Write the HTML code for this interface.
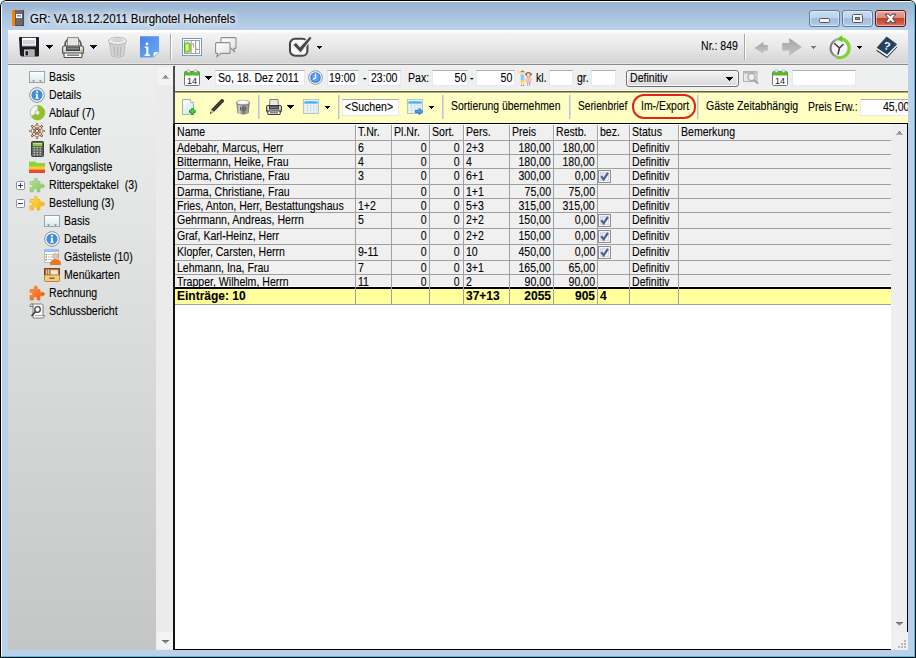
<!DOCTYPE html>
<html><head><meta charset="utf-8">
<style>
*{box-sizing:border-box;margin:0;padding:0}
html,body{width:916px;height:658px;overflow:hidden;background:#fff}
body{font-family:"Liberation Sans",sans-serif;font-size:12px;color:#000;position:relative}
.a{position:absolute}
svg{position:absolute;overflow:visible}
.t{position:absolute;white-space:pre;font-size:12px;line-height:14px;height:14px;transform:scaleX(.88);transform-origin:0 50%;-webkit-text-stroke:.1px #000}
.r{transform-origin:100% 50%}
.b{font-weight:bold;transform:scaleX(1)}
#win{left:0;top:0;width:916px;height:658px;background:#b9d1ea;border-radius:6px 6px 0 0;overflow:hidden}
#title{left:2px;top:2px;width:912px;height:28px;background:linear-gradient(#99b4d1,#b9d1ea)}
.inp{position:absolute;background:#fff;border:1px solid #e3e9ef;border-top-color:#abadb3}
.sep{position:absolute;width:2px;border-left:1px solid #a8a8a8;border-right:1px solid #fff}
.ysep{position:absolute;width:2px;border-left:1px solid #c2c2d0;border-right:1px solid #dedee0}
.hl{position:absolute;height:1px;background:#a0a0a0}
.vl{position:absolute;width:1px;background:#a0a0a0}
.cb{position:absolute;width:13px;height:13px;border:1px solid #8e8f8f;background:linear-gradient(135deg,#cdd1dc,#f6f6f9 70%);box-shadow:inset 0 0 0 1px #f4f4f4, inset 0 0 0 2px #d6d9e2}
.arr{position:absolute;width:0;height:0;border-style:solid;border-color:#000 transparent transparent transparent}
</style></head><body>
<div id="win" class="a">
<div class="a" style="left:1px;top:1px;width:914px;height:656px;border:1px solid #fff;border-right-color:#38c8f0;border-bottom-color:#38c8f0;border-radius:5px 5px 0 0"></div>
<div class="a" style="left:0;top:0;width:916px;height:658px;border:1px solid #000;border-radius:6px 6px 0 0"></div>
<div id="title" class="a"></div>

<svg style="left:12px;top:10px" width="12" height="16" viewBox="0 0 12 16"><rect x="0" y="0" width="12" height="16" rx="1" fill="#6a6a6a"/><rect x="10.5" y="0" width="1.5" height="16" fill="#4c4c4c"/><rect x="3" y="15" width="9" height="1" fill="#4c4c4c"/><rect x="0" y="0" width="3" height="16" fill="#ff7f00"/><rect x="3" y="0" width=".6" height="16" fill="#555"/><rect x="4" y="4" width="6" height="4" fill="#fff"/><rect x="5" y="5.2" width="4" height="1.3" fill="#5878d8"/></svg>
<span class="t" style="left:30px;top:11px;font-size:12px;line-height:16px;height:16px;transform:scaleX(.96);text-shadow:0 0 6px #fff,0 0 6px #fff,0 0 10px #fff">GR: VA 18.12.2011 Burghotel Hohenfels</span>
<div class="a" style="left:809px;top:10px;width:31px;height:17px;border:1px solid #5d7ea3;border-radius:3px;background:linear-gradient(#c9dbef 0,#bfd3ea 45%,#a3bfdf 50%,#a9c4e2 80%,#b9d0ea 100%);box-shadow:inset 0 0 0 1px rgba(255,255,255,.45)"></div><div class="a" style="left:842px;top:10px;width:31px;height:17px;border:1px solid #5d7ea3;border-radius:3px;background:linear-gradient(#c9dbef 0,#bfd3ea 45%,#a3bfdf 50%,#a9c4e2 80%,#b9d0ea 100%);box-shadow:inset 0 0 0 1px rgba(255,255,255,.45)"></div><div class="a" style="left:875px;top:10px;width:31px;height:17px;border:1px solid #5b1a22;border-radius:3px;background:linear-gradient(#e9a99c 0,#dc8b7b 45%,#c4432b 50%,#cf5a45 80%,#d87a66 100%);box-shadow:inset 0 0 0 1px rgba(255,255,255,.45)"></div><div class="a" style="left:819px;top:18px;width:11px;height:5px;background:#f4f4f4;border:1px solid #555c66;border-radius:1.5px"></div><div class="a" style="left:852px;top:14px;width:11px;height:9px;background:#f4f4f4;border:1px solid #555c66;border-radius:1.5px"></div><div class="a" style="left:855px;top:17px;width:5px;height:3px;background:#7f9fd0;border:1px solid #555c66"></div><svg style="left:884px;top:13px" width="13" height="11" viewBox="0 0 13 11"><path d="M1.200 1.200 L5 1.200 L6.500 3.200 L8 1.200 L11.800 1.200 L8.500 5.400 L11.800 9.700 L8 9.700 L6.500 7.600 L5 9.700 L1.200 9.700 L4.500 5.400 Z" fill="#fff" stroke="#44444e" stroke-width="1" stroke-linejoin="round"/></svg>
<div class="a" style="left:8px;top:30px;width:900px;height:620px;background:#f0f0f0;overflow:hidden"><div class="a" style="left:-8px;top:-30px;width:916px;height:658px">
<div class="a" style="left:8px;top:30px;width:900px;height:33px;background:linear-gradient(#fff 0,#fff 2px,#f4f4f4 3px,#e9e9e9 16px,#d4d4d4 33px)"></div>
<div class="a" style="left:8px;top:63px;width:900px;height:1px;background:#e4e4e4"></div>
<div class="a" style="left:8px;top:64px;width:900px;height:1px;background:#8a8a8a"></div>
<div class="a" style="left:8px;top:65px;width:900px;height:1px;background:#f2f2f2"></div>
<svg style="left:19px;top:37px" width="20" height="20" viewBox="0 0 20 20"><path d="M0 1 a1 1 0 0 1 1-1 h18 a1 1 0 0 1 1 1 v17.500 a1 1 0 0 1-1 1 h-16.500 l-1.500-1.500z" fill="#1c1c24"/><rect x="3" y=".8" width="14" height="8.400" fill="#fdfdfd"/><rect x="4" y="3" width="12" height="4.300" fill="#d4d4d4"/><rect x="3" y="8.200" width="14" height="1" fill="#b8c4e0"/><rect x="5" y="12.500" width="10.500" height="7" fill="#c4c4c4"/><rect x="10" y="12.500" width="5.500" height="7" fill="#b0b0b0"/><rect x="6.500" y="14" width="2.600" height="4.500" rx="1" fill="#1c1c24"/></svg><svg style="left:46px;top:45px" width="7" height="4" fill="#000" shape-rendering="crispEdges"><rect x="0" y="0" width="7" height="1"/><rect x="1" y="1" width="5" height="1"/><rect x="2" y="2" width="3" height="1"/><rect x="3" y="3" width="1" height="1"/></svg><svg style="left:62px;top:37px" width="22" height="21" viewBox="0 0 22 21"><defs><linearGradient id="gp" x1="0" y1="0" x2="0" y2="1"><stop offset="0" stop-color="#f4f4f2"/><stop offset="1" stop-color="#c4c6c2"/></linearGradient></defs><path d="M3 10 q-.5-6 3-7.500 M19 10 q.5-6-3-7.500" fill="none" stroke="#5a5a5a" stroke-width="1.600"/><path d="M5.500 .7 h11 l.3 9 h-11.600z" fill="#f2f4ee" stroke="#6e6e6e" stroke-width=".9"/><rect x="6.500" y="1.500" width="9" height="7" fill="#e2e6dc"/><rect x=".6" y="9" width="20.800" height="8" rx="1.800" fill="url(#gp)" stroke="#4c4c4c" stroke-width="1.100"/><rect x="4" y="9.500" width="14" height="4.500" fill="#3e4444"/><rect x="5" y="10.500" width="12" height="2" fill="#7c8884"/><rect x="18.800" y="13" width="1.300" height="1.500" fill="#f0a020"/><path d="M2 16 h18 v3.500 q0 1-1 1 h-16 q-1 0-1-1z" fill="#f8f8f8" stroke="#4c4c4c" stroke-width="1.100"/><rect x="5" y="17.600" width="12" height="1.100" fill="#555"/></svg><svg style="left:90px;top:45px" width="7" height="4" fill="#000" shape-rendering="crispEdges"><rect x="0" y="0" width="7" height="1"/><rect x="1" y="1" width="5" height="1"/><rect x="2" y="2" width="3" height="1"/><rect x="3" y="3" width="1" height="1"/></svg><svg style="left:108px;top:36px" width="19" height="22" viewBox="0 0 19 22"><ellipse cx="9.5" cy="5" rx="9" ry="3.6" fill="#f0f0f0" stroke="#b6b6b6" stroke-width="1"/><path d="M1.500 7 L3.500 20 Q9.500 23 15.500 20 L17.500 7 Q9.500 10.500 1.500 7z" fill="#d2d2d2" stroke="#b6b6b6" stroke-width=".8"/><path d="M6 10.500 L6.800 19.500 M9.500 11 V20 M13 10.500 L12.200 19.500" stroke="#b6b6b6" stroke-width="1.200"/><ellipse cx="9.5" cy="4.300" rx="6" ry="2" fill="#b6b6b6" opacity=".5"/></svg><svg style="left:140px;top:36px" width="19" height="22" viewBox="0 0 19 22"><defs><linearGradient id="gi" x1="0" y1="0" x2="1" y2="1"><stop offset="0" stop-color="#4585e6"/><stop offset="1" stop-color="#6dabf8"/></linearGradient></defs><path d="M0 .2 h19 v15.800 l-5.500 5.400 h-13.500z" fill="url(#gi)"/><path d="M19 16 l-5.500 5.400 v-3.800 q0-1.600 1.600-1.600z" fill="#f2f5fa"/><path d="M13.500 21.400 l5.500-5.400" stroke="#8090a8" stroke-width=".6"/><circle cx="7" cy="7.900" r="1.400" fill="#fff"/><path d="M4.800 10.400 h3.600 v8 h1.600 v1.500 h-5.400 v-1.500 h1.600 v-6.500 h-1.400z" fill="#fff"/></svg><svg style="left:182px;top:38px" width="20" height="18" viewBox="0 0 20 18"><rect x=".5" y=".5" width="19" height="17" fill="#fff" stroke="#6d9fc4"/><rect x="2.500" y="2.500" width="15" height="13" fill="#fff" stroke="#a8a0a0"/><rect x="8.500" y="2.500" width="1.200" height="13" fill="#a8a0a0"/><rect x="13" y="2.500" width="1.200" height="13" fill="#a8a0a0"/><rect x="9.500" y="5.500" width="2" height="1" fill="#a8a0a0"/><rect x="11" y="5.500" width="1" height="4" fill="#a8a0a0"/><rect x="14" y="10.800" width="3.500" height="1.200" fill="#a8a0a0"/><rect x="4.500" y="2.500" width="2" height="1.500" fill="#c8c4c4"/><rect x="2.500" y="5" width="5.500" height="9" rx="1.200" fill="#a6ea48" stroke="#5fa812" stroke-width="1"/><rect x="4" y="6.500" width="2.500" height="6" rx=".8" fill="#ccfa8c"/></svg><svg style="left:215px;top:37px" width="22" height="20" viewBox="0 0 22 20"><defs><linearGradient id="gc" x1="0" y1="0" x2="1" y2="1"><stop offset="0" stop-color="#fff"/><stop offset="1" stop-color="#e2e2e2"/></linearGradient></defs><path d="M7 .6 h13 a1 1 0 0 1 1 1 v8.800 a1 1 0 0 1-1 1 h-1.200 l.6 3.200 l-3.400-3.200 h-9 a1 1 0 0 1-1-1 v-8.800 a1 1 0 0 1 1-1z" fill="url(#gc)" stroke="#8e8e8e" stroke-width="1.100"/><path d="M1.600 5.600 h12.500 a1 1 0 0 1 1 1 v8.800 a1 1 0 0 1-1 1 h-8.300 l-3.800 3.300 l.6-3.300 h-1 a1 1 0 0 1-1-1 v-8.800 a1 1 0 0 1 1-1z" fill="url(#gc)" stroke="#8e8e8e" stroke-width="1.100"/></svg><svg style="left:288px;top:36px" width="24" height="22" viewBox="0 0 24 22"><rect x="2" y="2.700" width="17.400" height="17.100" rx="5" fill="#fbfbfb" stroke="#474747" stroke-width="2.100"/><path d="M5.600 9 L7.900 6.900 L12 11.400 L21.900 .7 L23.500 2 L12.600 16.200 Z" fill="#484848" stroke="#ececec" stroke-width="2.200" paint-order="stroke"/></svg><svg style="left:317px;top:46px" width="5" height="3" fill="#000" shape-rendering="crispEdges"><rect x="0" y="0" width="5" height="1"/><rect x="1" y="1" width="3" height="1"/><rect x="2" y="2" width="1" height="1"/></svg><svg style="left:753px;top:41px" width="16" height="14" viewBox="0 0 16 14"><defs><linearGradient id="ga" x1="0" y1="0" x2="0" y2="1"><stop offset="0" stop-color="#a4a4a4"/><stop offset="1" stop-color="#c6c6c6"/></linearGradient></defs><path d="M1.300 6.900 L10.500 1 V4.100 H14.800 V9.800 H10.500 V12.800 Z" fill="url(#ga)"/></svg><svg style="left:781px;top:38px" width="22" height="18" viewBox="0 0 22 18"><path d="M20.900 9 L8.200 .1 V4.900 H1.200 V12.800 H8.200 V18 Z" fill="url(#ga)"/></svg><svg style="left:811px;top:46px" width="5" height="3" fill="#7a7a7a" shape-rendering="crispEdges"><rect x="0" y="0" width="5" height="1"/><rect x="1" y="1" width="3" height="1"/><rect x="2" y="2" width="1" height="1"/></svg><svg style="left:828px;top:35px" width="24" height="24" viewBox="0 0 24 24"><defs><linearGradient id="gk" x1="0" y1="0" x2="1" y2="0"><stop offset="0" stop-color="#7a7a7a"/><stop offset=".6" stop-color="#c8c8c8"/></linearGradient></defs><circle cx="11.500" cy="13.200" r="9" fill="#f6f4fa" stroke="url(#gk)" stroke-width="2.200"/><path d="M11.500 13 L6.500 8.500 M11.500 13 L15 9.500 M11.500 13 L10 19" stroke="#3c3c3c" stroke-width="1.500" fill="none" stroke-linecap="round"/><path d="M12.500 3.600 A9.600 9.600 0 1 1 8.400 22.200" fill="none" stroke="#7ad828" stroke-width="3"/><path d="M14 .2 L8.800 3.800 L14.600 7.200z" fill="#66cc22"/></svg><svg style="left:857px;top:46px" width="5" height="3" fill="#000" shape-rendering="crispEdges"><rect x="0" y="0" width="5" height="1"/><rect x="1" y="1" width="3" height="1"/><rect x="2" y="2" width="1" height="1"/></svg><svg style="left:876px;top:36px" width="22" height="22" viewBox="0 0 22 22"><path d="M.6 13.600 L11.100 20.400 L21.100 10 V11.300 L11.100 21.900 L.6 14.900z" fill="#1a3450"/><path d="M.6 11.700 L11.100 18.400 L21.100 8.200 V10 L11.100 20.400 L.6 13.600z" fill="#f2f5f8"/><path d="M.6 11.700 L10.600 .4 L21.100 8.200 L11.100 18.400z" fill="#25435f"/><text x="11" y="13.800" font-family="Liberation Sans" font-weight="bold" font-size="11" fill="#fff" text-anchor="middle" transform="rotate(12 11 10)">?</text></svg>
<span class="t " style="left:701px;top:39px;">Nr.: 849</span>
<div class="sep" style="left:170px;top:34px;height:26px"></div>
<div class="sep" style="left:744px;top:34px;height:26px"></div>
<div class="a" style="left:8px;top:66px;width:148px;height:584px;background:linear-gradient(#eef0f0,#c4c6c5)"></div>
<div class="a" style="left:156px;top:66px;width:17px;height:584px;background:#ebebeb"></div>
<div class="a" style="left:157px;top:67px;width:16px;height:18px;background:#f3f3f3"></div>
<div class="a" style="left:157px;top:632px;width:16px;height:17px;background:#f3f3f3"></div>
<div class="a" style="left:173px;top:66px;width:2px;height:584px;background:linear-gradient(#4c4c4c 0,#4c4c4c 57px,#111 58px)"></div>
<svg style="left:162px;top:75px" width="7" height="4" shape-rendering="crispEdges"><rect x="3" y="0" width="1" height="1" fill="#6e6e6e"/><rect x="2" y="1" width="3" height="1" fill="#868686"/><rect x="1" y="2" width="5" height="1" fill="#9c9c9c"/><rect x="0" y="3" width="7" height="1" fill="#b0b0b0"/></svg>
<svg style="left:162px;top:640px" width="7" height="4" shape-rendering="crispEdges"><rect x="0" y="0" width="7" height="1" fill="#6e6e6e"/><rect x="1" y="1" width="5" height="1" fill="#868686"/><rect x="2" y="2" width="3" height="1" fill="#9c9c9c"/><rect x="3" y="3" width="1" height="1" fill="#b0b0b0"/></svg>
<svg style="left:29px;top:69px" width="16" height="16" viewBox="0 0 16 16"><defs><linearGradient id="gb" x1="0" y1="0" x2="0" y2="1"><stop offset="0" stop-color="#fff"/><stop offset="1" stop-color="#d6e8ea"/></linearGradient></defs><rect x=".5" y="2.500" width="15" height="11" fill="url(#gb)" stroke="#98a6a8"/><rect x="4" y="11" width="1" height="2" fill="#7c8c8e"/><rect x="11" y="11" width="1" height="2" fill="#7c8c8e"/><rect x="3" y="11" width="3" height="1" fill="#a8b8ba"/><rect x="10" y="11" width="3" height="1" fill="#a8b8ba"/></svg>
<span class="t " style="left:49px;top:70px;">Basis</span>
<svg style="left:29px;top:87px" width="16" height="16" viewBox="0 0 16 16"><circle cx="8" cy="8" r="7.300" fill="#fff" stroke="#8c8c8c" stroke-width="1"/><circle cx="8" cy="8" r="5.600" fill="#3f8fdc"/><circle cx="8" cy="4.800" r="1.100" fill="#fff"/><path d="M6.500 6.800 h2.400 v4 h.9 v1 h-3.600 v-1 h.9 v-3 h-.6z" fill="#fff"/></svg>
<span class="t " style="left:49px;top:88px;">Details</span>
<svg style="left:29px;top:105px" width="16" height="16" viewBox="0 0 16 16"><circle cx="8.500" cy="7.700" r="4.900" fill="none" stroke="#f4f4f4" stroke-width="4.800"/><circle cx="8.500" cy="7.700" r="7.300" fill="none" stroke="#a8a8a8" stroke-width=".8"/><circle cx="8.500" cy="7.700" r="2.400" fill="none" stroke="#a8a8a8" stroke-width=".8"/><path d="M8.500 2.800 A4.900 4.900 0 1 1 4.100 10" fill="none" stroke="#8fc321" stroke-width="5"/></svg>
<span class="t " style="left:49px;top:106px;">Ablauf (7)</span>
<svg style="left:29px;top:123px" width="16" height="16" viewBox="0 0 16 16"><path d="M9.50 8.00 L14.90 8.00" stroke="#7c5434" stroke-width="2.200" stroke-linecap="round"/><path d="M9.06 9.06 L12.88 12.88" stroke="#7c5434" stroke-width="2.200" stroke-linecap="round"/><path d="M8.00 9.50 L8.00 14.90" stroke="#7c5434" stroke-width="2.200" stroke-linecap="round"/><path d="M6.94 9.06 L3.12 12.88" stroke="#7c5434" stroke-width="2.200" stroke-linecap="round"/><path d="M6.50 8.00 L1.10 8.00" stroke="#7c5434" stroke-width="2.200" stroke-linecap="round"/><path d="M6.94 6.94 L3.12 3.12" stroke="#7c5434" stroke-width="2.200" stroke-linecap="round"/><path d="M8.00 6.50 L8.00 1.10" stroke="#7c5434" stroke-width="2.200" stroke-linecap="round"/><path d="M9.06 6.94 L12.88 3.12" stroke="#7c5434" stroke-width="2.200" stroke-linecap="round"/><circle cx="8" cy="8" r="4.600" fill="none" stroke="#7c5434" stroke-width="2.400"/><circle cx="8" cy="8" r="4.600" fill="none" stroke="#fbf2e6" stroke-width="1"/><path d="M9.50 8.00 L14.90 8.00" stroke="#fbf2e6" stroke-width=".8" stroke-linecap="round"/><path d="M9.06 9.06 L12.88 12.88" stroke="#fbf2e6" stroke-width=".8" stroke-linecap="round"/><path d="M8.00 9.50 L8.00 14.90" stroke="#fbf2e6" stroke-width=".8" stroke-linecap="round"/><path d="M6.94 9.06 L3.12 12.88" stroke="#fbf2e6" stroke-width=".8" stroke-linecap="round"/><path d="M6.50 8.00 L1.10 8.00" stroke="#fbf2e6" stroke-width=".8" stroke-linecap="round"/><path d="M6.94 6.94 L3.12 3.12" stroke="#fbf2e6" stroke-width=".8" stroke-linecap="round"/><path d="M8.00 6.50 L8.00 1.10" stroke="#fbf2e6" stroke-width=".8" stroke-linecap="round"/><path d="M9.06 6.94 L12.88 3.12" stroke="#fbf2e6" stroke-width=".8" stroke-linecap="round"/><circle cx="8" cy="8" r="1.700" fill="#fff" stroke="#7c5434" stroke-width="1"/></svg>
<span class="t " style="left:49px;top:124px;">Info Center</span>
<svg style="left:29px;top:141px" width="16" height="16" viewBox="0 0 16 16"><rect x="2.500" y=".5" width="12" height="15" rx="1" fill="#5c625c" stroke="#3e423e"/><rect x="4" y="2" width="9" height="3" fill="#86d03c"/><rect x="4" y="2" width="9" height="1" fill="#b6ec78"/><rect x="4.5" y="6.0" width="1.600" height="1.300" fill="#c8ccc8"/><rect x="7.5" y="6.0" width="1.600" height="1.300" fill="#c8ccc8"/><rect x="10.5" y="6.0" width="1.600" height="1.300" fill="#c8ccc8"/><rect x="4.5" y="8.4" width="1.600" height="1.300" fill="#c8ccc8"/><rect x="7.5" y="8.4" width="1.600" height="1.300" fill="#c8ccc8"/><rect x="10.5" y="8.4" width="1.600" height="1.300" fill="#c8ccc8"/><rect x="4.5" y="10.8" width="1.600" height="1.300" fill="#c8ccc8"/><rect x="7.5" y="10.8" width="1.600" height="1.300" fill="#c8ccc8"/><rect x="10.5" y="10.8" width="1.600" height="1.300" fill="#c8ccc8"/><rect x="4.5" y="13.2" width="1.600" height="1.300" fill="#c8ccc8"/><rect x="7.5" y="13.2" width="1.600" height="1.300" fill="#c8ccc8"/><rect x="10.5" y="13.2" width="1.600" height="1.300" fill="#c8ccc8"/></svg>
<span class="t " style="left:49px;top:142px;">Kalkulation</span>
<svg style="left:29px;top:159px" width="16" height="16" viewBox="0 0 16 16"><path d="M0 2.500 h6.500 l1.500 1.500 h8 v4 h-16z" fill="#8ed342"/><rect x="0" y="7.500" width="16" height="3" fill="#ffcd1c"/><rect x="0" y="10.500" width="16" height="3.500" fill="#ea4a32"/></svg>
<span class="t " style="left:49px;top:160px;">Vorgangsliste</span>
<svg style="left:29px;top:177px" width="16" height="16" viewBox="0 0 16 16"><defs><linearGradient id="pg" x1="0" y1="0" x2="1" y2="1"><stop offset="0" stop-color="#bce498"/><stop offset="1" stop-color="#84c25c"/></linearGradient></defs><path d="M1 4.500 H5.200 V2.600 a1.600 1.600 0 1 1 3.200 0 V4.500 H11 V7.200 H13 a1.900 1.900 0 1 1 0 3.600 H11 V15 H8 V13.300 a1.700 1.700 0 1 0-3.400 0 V15 H1 V10.500 H2.200 a1.500 1.500 0 1 0 0-3 H1 Z" fill="url(#pg)" stroke="#9cc480" stroke-width=".7"/></svg>
<span class="t " style="left:49px;top:178px;">Ritterspektakel  (3)</span>
<svg style="left:29px;top:195px" width="16" height="16" viewBox="0 0 16 16"><defs><linearGradient id="py" x1="0" y1="0" x2="1" y2="1"><stop offset="0" stop-color="#ffe060"/><stop offset="1" stop-color="#ffaa00"/></linearGradient></defs><path d="M1 4.500 H5.200 V2.600 a1.600 1.600 0 1 1 3.200 0 V4.500 H11 V7.200 H13 a1.900 1.900 0 1 1 0 3.600 H11 V15 H8 V13.300 a1.700 1.700 0 1 0-3.400 0 V15 H1 V10.500 H2.200 a1.500 1.500 0 1 0 0-3 H1 Z" fill="url(#py)" stroke="#eeb020" stroke-width=".7"/></svg>
<span class="t " style="left:49px;top:196px;">Bestellung (3)</span>
<svg style="left:44px;top:213px" width="16" height="16" viewBox="0 0 16 16"><defs><linearGradient id="gb" x1="0" y1="0" x2="0" y2="1"><stop offset="0" stop-color="#fff"/><stop offset="1" stop-color="#d6e8ea"/></linearGradient></defs><rect x=".5" y="2.500" width="15" height="11" fill="url(#gb)" stroke="#98a6a8"/><rect x="4" y="11" width="1" height="2" fill="#7c8c8e"/><rect x="11" y="11" width="1" height="2" fill="#7c8c8e"/><rect x="3" y="11" width="3" height="1" fill="#a8b8ba"/><rect x="10" y="11" width="3" height="1" fill="#a8b8ba"/></svg>
<span class="t " style="left:64px;top:214px;">Basis</span>
<svg style="left:44px;top:231px" width="16" height="16" viewBox="0 0 16 16"><circle cx="8" cy="8" r="7.300" fill="#fff" stroke="#8c8c8c" stroke-width="1"/><circle cx="8" cy="8" r="5.600" fill="#3f8fdc"/><circle cx="8" cy="4.800" r="1.100" fill="#fff"/><path d="M6.500 6.800 h2.400 v4 h.9 v1 h-3.600 v-1 h.9 v-3 h-.6z" fill="#fff"/></svg>
<span class="t " style="left:64px;top:232px;">Details</span>
<svg style="left:44px;top:249px" width="16" height="16" viewBox="0 0 16 16"><rect x=".5" y=".5" width="14" height="13" fill="#fff" stroke="#b4bcc8" stroke-width="1"/><rect x="0" y="0" width="15" height="3" fill="#9cc0ee"/><rect x="1.500" y="5" width="1.500" height="1.200" fill="#3aa83a"/><rect x="1.500" y="7.500" width="1.500" height="1.200" fill="#3aa83a"/><rect x="1.500" y="10" width="1.500" height="1.200" fill="#e03030"/><rect x="4" y="5" width="5" height="1" fill="#c8c8c8"/><rect x="4" y="7.500" width="5" height="1" fill="#c8c8c8"/><rect x="4" y="10" width="4" height="1" fill="#c8c8c8"/><circle cx="11.500" cy="7" r="2.600" fill="#f0c8a0" stroke="#b08868" stroke-width=".6"/><path d="M6.500 15.500 q0-5 5-5 q5 0 5 5z" fill="#f07818" stroke="#c85c08" stroke-width=".6"/></svg>
<span class="t " style="left:64px;top:250px;">Gästeliste (10)</span>
<svg style="left:44px;top:267px" width="16" height="16" viewBox="0 0 16 16"><rect x=".5" y="1.500" width="15" height="6.500" fill="#a8623a" stroke="#7c4422"/><rect x="2" y="2.500" width="1.200" height="5" fill="#e8c890"/><rect x="4" y="2.500" width="1.200" height="5" fill="#e8c890"/><rect x="6.500" y="3" width="7.500" height="5" fill="#f6ead0" stroke="#c0a070" stroke-width=".6"/><rect x=".5" y="8" width="15" height="6.500" rx=".8" fill="#f2cc84" stroke="#b88838"/><rect x="5.500" y="10.500" width="5" height="1.500" fill="#8c6428"/></svg>
<span class="t " style="left:64px;top:268px;">Menükarten</span>
<svg style="left:29px;top:285px" width="16" height="16" viewBox="0 0 16 16"><defs><linearGradient id="po" x1="0" y1="0" x2="1" y2="1"><stop offset="0" stop-color="#ff9848"/><stop offset="1" stop-color="#e85808"/></linearGradient></defs><path d="M1 4.500 H5.200 V2.600 a1.600 1.600 0 1 1 3.200 0 V4.500 H11 V7.200 H13 a1.900 1.900 0 1 1 0 3.600 H11 V15 H8 V13.300 a1.700 1.700 0 1 0-3.400 0 V15 H1 V10.500 H2.200 a1.500 1.500 0 1 0 0-3 H1 Z" fill="url(#po)" stroke="#e87830" stroke-width=".7"/></svg>
<span class="t " style="left:49px;top:286px;">Rechnung</span>
<svg style="left:29px;top:303px" width="16" height="16" viewBox="0 0 16 16"><path d="M2.500 1 h10 q1.500 0 1.500 1.500 v10 h1.500 q0 2.500-2.500 2.500 h-9 v-12.500 q0-1.500-1.500-1.500z" fill="#fafafa" stroke="#707070" stroke-width=".9"/><path d="M1 2.500 q0-1.500 1.500-1.500 q1.500 0 1.500 1.500 v1 h-3z" fill="#e0e0e0" stroke="#707070" stroke-width=".9"/><circle cx="8.500" cy="6.500" r="2.800" fill="#fff" stroke="#404040" stroke-width="1.300"/><path d="M6.500 8.700 L2.500 13" stroke="#404040" stroke-width="1.800"/><path d="M6 12.500 h8" stroke="#909090" stroke-width=".8"/></svg>
<span class="t " style="left:49px;top:304px;">Schlussbericht</span>
<svg style="left:16px;top:181px" width="9" height="9" viewBox="0 0 9 9"><rect x=".5" y=".5" width="8" height="8" rx="1" fill="#fff" stroke="#919191"/><rect x="2" y="4" width="5" height="1" fill="#2a3c8c"/><rect x="4" y="2" width="1" height="5" fill="#2a3c8c"/></svg>
<svg style="left:16px;top:199px" width="9" height="9" viewBox="0 0 9 9"><rect x=".5" y=".5" width="8" height="8" rx="1" fill="#fff" stroke="#919191"/><rect x="2" y="4" width="5" height="1" fill="#2a3c8c"/></svg>
<div class="a" style="left:175px;top:66px;width:733px;height:24px;background:#eeefef"></div>
<div class="a" style="left:175px;top:90px;width:733px;height:1px;background:#ffff9c"></div>
<div class="a" style="left:175px;top:91px;width:733px;height:1px;background:#5c5c64"></div>
<div class="a" style="left:175px;top:92px;width:733px;height:1px;background:#a6a69c"></div>
<svg style="left:184px;top:70px" width="16" height="16" viewBox="0 0 16 16"><rect x=".5" y="1.500" width="15" height="14" rx="1" fill="#fff" stroke="#777"/><path d="M.5 2.500 a1 1 0 0 1 1-1 h13 a1 1 0 0 1 1 1 v3 h-15z" fill="#58b828"/><rect x="3" y="0" width="3" height="2.500" rx=".8" fill="#f0f0f0" stroke="#888" stroke-width=".5"/><rect x="10" y="0" width="3" height="2.500" rx=".8" fill="#f0f0f0" stroke="#888" stroke-width=".5"/><text x="8" y="13.500" font-family="Liberation Sans" font-size="9" fill="#1a1a1a" text-anchor="middle">14</text></svg><svg style="left:205px;top:76px" width="7" height="4" fill="#000" shape-rendering="crispEdges"><rect x="0" y="0" width="7" height="1"/><rect x="1" y="1" width="5" height="1"/><rect x="2" y="2" width="3" height="1"/><rect x="3" y="3" width="1" height="1"/></svg><div class="inp" style="left:215px;top:70px;width:90px;height:16px"></div><span class="t" style="left:218px;top:71px">So, 18. Dez 2011</span><svg style="left:308px;top:70px" width="15" height="15" viewBox="0 0 15 15"><circle cx="7.500" cy="7.500" r="6.800" fill="#fff" stroke="#909090" stroke-width="1"/><circle cx="7.500" cy="7.500" r="5.300" fill="#2f7fe0"/><circle cx="7.500" cy="7.500" r="4" fill="#5aa0f0"/><path d="M7.500 3.500 V7.800 L5 9.500" stroke="#fff" stroke-width="1.300" fill="none"/></svg><div class="inp" style="left:327px;top:70px;width:32px;height:16px"></div><span class="t" style="left:329px;top:71px">19:00</span><span class="t" style="left:363px;top:71px">-</span><div class="inp" style="left:368px;top:70px;width:33px;height:16px"></div><span class="t" style="left:371px;top:71px">23:00</span><span class="t" style="left:408px;top:71px">Pax:</span><div class="inp" style="left:432px;top:70px;width:36px;height:16px"></div><span class="t r" style="right:450px;top:71px">50</span><span class="t" style="left:470px;top:71px">-</span><div class="inp" style="left:476px;top:70px;width:39px;height:16px"></div><span class="t r" style="right:404px;top:71px">50</span><svg style="left:517px;top:69px" width="17" height="17" viewBox="0 0 17 17"><path d="M.6 1.600 L3.800 5.800" stroke="#fbdcae" stroke-width="1.700" stroke-linecap="round"/><circle cx="5.500" cy="3.700" r="1.900" fill="#fbdcae"/><path d="M3.500 3.400 a2 2 0 0 1 4 0 l-.6-.2 q-1.400-.9-2.800 0z" fill="#9a7448"/><rect x="3.700" y="5.600" width="3.500" height="5.500" fill="#8acbe6"/><rect x="3.700" y="11" width="3.500" height="2.200" fill="#f6d63a"/><rect x="4" y="13.200" width="1" height="3" fill="#f0c89c"/><rect x="6" y="13.200" width="1" height="3" fill="#f0c89c"/><rect x="3.800" y="16" width="1.300" height=".8" fill="#8a6a4a"/><rect x="5.900" y="16" width="1.300" height=".8" fill="#8a6a4a"/><ellipse cx="11.500" cy="5.400" rx="2.700" ry="2.400" fill="#8c6c4c"/><circle cx="8.900" cy="5.300" r="1" fill="#b87060"/><circle cx="14.200" cy="5.300" r="1" fill="#b87060"/><circle cx="11.500" cy="6" r="1.700" fill="#fbdcae"/><path d="M10.200 8 h2.800 l1.700 6 h-6.200z" fill="#f7b7c6"/><path d="M9.800 8.500 L8.200 11.800 M13.400 8.500 L15.200 11.300" stroke="#f4d0a8" stroke-width="1.100"/><rect x="10.300" y="14" width=".9" height="2.600" fill="#a89888"/><rect x="12.200" y="14" width=".9" height="2.600" fill="#a89888"/></svg><span class="t" style="left:536px;top:71px">kl.</span><div class="inp" style="left:549px;top:70px;width:24px;height:16px"></div><span class="t" style="left:577px;top:71px">gr.</span><div class="inp" style="left:591px;top:70px;width:25px;height:16px"></div><div class="a" style="left:626px;top:70px;width:113px;height:17px;border:1px solid #707070;border-radius:3px;background:linear-gradient(#f4f4f4,#e6e6e6 50%,#dadada);box-shadow:inset 0 0 0 1px #fcfcfc"></div><span class="t" style="left:630px;top:71px">Definitiv</span><svg style="left:726px;top:77px" width="7" height="4" fill="#000" shape-rendering="crispEdges"><rect x="0" y="0" width="7" height="1"/><rect x="1" y="1" width="5" height="1"/><rect x="2" y="2" width="3" height="1"/><rect x="3" y="3" width="1" height="1"/></svg><svg style="left:743px;top:70px" width="16" height="15" viewBox="0 0 16 15"><rect x=".5" y="1.500" width="13.500" height="10" fill="#e9e9e9" stroke="#b2b2b2"/><rect x=".5" y="1.500" width="13.500" height="2.200" fill="#b8b8b8"/><circle cx="8.500" cy="7" r="3.600" fill="#f0f0f0" stroke="#a8a8a8" stroke-width="1.300"/><path d="M11.200 9.700 L15 13.800" stroke="#a8a8a8" stroke-width="2"/></svg><svg style="left:772px;top:70px" width="16" height="16" viewBox="0 0 16 16"><rect x=".5" y="1.500" width="15" height="14" rx="1" fill="#fff" stroke="#777"/><path d="M.5 2.500 a1 1 0 0 1 1-1 h13 a1 1 0 0 1 1 1 v3 h-15z" fill="#58b828"/><rect x="3" y="0" width="3" height="2.500" rx=".8" fill="#f0f0f0" stroke="#888" stroke-width=".5"/><rect x="10" y="0" width="3" height="2.500" rx=".8" fill="#f0f0f0" stroke="#888" stroke-width=".5"/><text x="8" y="13.500" font-family="Liberation Sans" font-size="9" fill="#1a1a1a" text-anchor="middle">14</text></svg><div class="inp" style="left:792px;top:70px;width:64px;height:16px"></div>
<div class="a" style="left:175px;top:93px;width:733px;height:30px;background:#ffffc3"></div>
<svg style="left:182px;top:99px" width="15" height="17" viewBox="0 0 15 17"><defs><linearGradient id="gd" x1="0" y1="0" x2="1" y2="1"><stop offset="0" stop-color="#fff"/><stop offset="1" stop-color="#cfe4e8"/></linearGradient></defs><path d="M.5 .5 h8 l3 3 v12 h-11z" fill="url(#gd)" stroke="#a4b2b4"/><path d="M8.500 .5 v3 h3" fill="#f4f8fa" stroke="#a4b2b4" stroke-width=".8"/><path d="M10.400 10.600 v3.600 M8.600 12.400 h3.600" stroke="#14901c" stroke-width="3.400" stroke-linecap="round"/><path d="M10.400 10 v4.800 M8 12.400 h4.800" stroke="#3cdc44" stroke-width="1.700"/></svg><svg style="left:209px;top:98px" width="16" height="17" viewBox="0 0 16 17"><path d="M1 16 L2.200 11.500 L12.500 1 Q14.500 .5 15.200 3.200 L5 13.800z" fill="#2c2c2c"/><path d="M2.200 11.500 L5 13.800 L1 16z" fill="#e8c890"/><path d="M1 16 l.6-2 l1.300 1z" fill="#222"/><path d="M4 12 L13.500 2.500" stroke="#666" stroke-width=".8"/></svg><svg style="left:236px;top:99px" width="14" height="16" viewBox="0 0 14 16"><defs><linearGradient id="gt" x1="0" y1="0" x2="1" y2="0"><stop offset="0" stop-color="#6a6a6a"/><stop offset=".2" stop-color="#cfcfcf"/><stop offset=".55" stop-color="#767676"/><stop offset=".82" stop-color="#a8a8a8"/><stop offset="1" stop-color="#606060"/></linearGradient></defs><path d="M.4 3.500 L1.300 14.300 Q7 16.800 12.700 14.300 L13.600 3.500 Z" fill="url(#gt)"/><ellipse cx="7" cy="3.600" rx="6.700" ry="2.300" fill="#ededed" stroke="#707070" stroke-width=".8"/><ellipse cx="7" cy="2.900" rx="4.800" ry="1.700" fill="#fafafa"/><path d="M4.500 8 v3.500 M6.300 8 v4 M8.100 8 v4 M9.900 8 v3.500" stroke="#555" stroke-width=".9"/></svg><div class="ysep" style="left:258px;top:95px;height:24px"></div><svg style="left:266px;top:99px" width="16" height="16" viewBox="0 0 16 16"><defs><linearGradient id="gp2" x1="0" y1="0" x2="0" y2="1"><stop offset="0" stop-color="#f0f0ee"/><stop offset="1" stop-color="#b8bab6"/></linearGradient></defs><path d="M4 .6 h8 l.4 6.500 h-8.800z" fill="#f4f6f0" stroke="#666" stroke-width=".9"/><rect x="5" y="1.500" width="6" height="4" fill="#e4e8de"/><rect x=".6" y="6.500" width="14.800" height="6.500" rx="1.500" fill="url(#gp2)" stroke="#3c3c3c" stroke-width="1.100"/><rect x="3" y="6.800" width="10" height="3.600" fill="#363c3c"/><rect x="4" y="7.600" width="8" height="1.600" fill="#74807c"/><rect x="13.400" y="10" width="1" height="1.200" fill="#f0a020"/><path d="M1.800 12 h12.400 v2.600 q0 .9-.9 .9 h-10.600 q-.9 0-.9-.9z" fill="#f8f8f8" stroke="#3c3c3c" stroke-width="1.100"/><rect x="4" y="13.300" width="8" height="1" fill="#555"/></svg><svg style="left:287px;top:105px" width="7" height="4" fill="#000" shape-rendering="crispEdges"><rect x="0" y="0" width="7" height="1"/><rect x="1" y="1" width="5" height="1"/><rect x="2" y="2" width="3" height="1"/><rect x="3" y="3" width="1" height="1"/></svg><svg style="left:303px;top:99px" width="16" height="15" viewBox="0 0 16 15"><rect x=".5" y=".5" width="15" height="14" fill="#fff" stroke="#b6c6be"/><rect x="1.500" y="1.500" width="13" height="12" fill="#c6d8e2"/><rect x="1.500" y="1.500" width="13" height="1" fill="#fff"/><rect x="1.500" y="2.300" width="13" height="2.400" fill="#34b2f6"/><rect x="1.500" y="3.800" width="13" height="1" fill="#7ccefc"/><rect x="2.0" y="5.3" width="2.300" height="1.300" fill="#fff"/><rect x="5.1" y="5.3" width="2.300" height="1.300" fill="#fff"/><rect x="8.2" y="5.3" width="2.300" height="1.300" fill="#fff"/><rect x="11.3" y="5.3" width="2.300" height="1.300" fill="#fff"/><rect x="2.0" y="7.4" width="2.300" height="1.300" fill="#fff"/><rect x="5.1" y="7.4" width="2.300" height="1.300" fill="#fff"/><rect x="8.2" y="7.4" width="2.300" height="1.300" fill="#fff"/><rect x="11.3" y="7.4" width="2.300" height="1.300" fill="#fff"/><rect x="2.0" y="9.5" width="2.300" height="1.300" fill="#fff"/><rect x="5.1" y="9.5" width="2.300" height="1.300" fill="#fff"/><rect x="8.2" y="9.5" width="2.300" height="1.300" fill="#fff"/><rect x="11.3" y="9.5" width="2.300" height="1.300" fill="#fff"/><rect x="2.0" y="11.6" width="2.300" height="1.300" fill="#fff"/><rect x="5.1" y="11.6" width="2.300" height="1.300" fill="#fff"/><rect x="8.2" y="11.6" width="2.300" height="1.300" fill="#fff"/><rect x="11.3" y="11.6" width="2.300" height="1.300" fill="#fff"/></svg><svg style="left:325px;top:106px" width="5" height="3" fill="#000" shape-rendering="crispEdges"><rect x="0" y="0" width="5" height="1"/><rect x="1" y="1" width="3" height="1"/><rect x="2" y="2" width="1" height="1"/></svg><div class="ysep" style="left:338px;top:95px;height:24px"></div><div class="inp" style="left:342px;top:99px;width:57px;height:17px"></div><span class="t" style="left:345px;top:100px">&lt;Suchen&gt;</span><svg style="left:407px;top:99px" width="16" height="15" viewBox="0 0 16 15"><rect x=".5" y=".5" width="15" height="14" fill="#fff" stroke="#b6c6be"/><rect x="1.500" y="1.500" width="13" height="12" fill="#c6d8e2"/><rect x="1.500" y="1.500" width="13" height="1" fill="#fff"/><rect x="1.500" y="2.300" width="13" height="2.400" fill="#34b2f6"/><rect x="1.500" y="3.800" width="13" height="1" fill="#7ccefc"/><rect x="2.0" y="5.3" width="2.300" height="1.300" fill="#fff"/><rect x="5.1" y="5.3" width="2.300" height="1.300" fill="#fff"/><rect x="8.2" y="5.3" width="2.300" height="1.300" fill="#fff"/><rect x="11.3" y="5.3" width="2.300" height="1.300" fill="#fff"/><rect x="2.0" y="7.4" width="2.300" height="1.300" fill="#fff"/><rect x="5.1" y="7.4" width="2.300" height="1.300" fill="#fff"/><rect x="8.2" y="7.4" width="2.300" height="1.300" fill="#fff"/><rect x="11.3" y="7.4" width="2.300" height="1.300" fill="#fff"/><rect x="2.0" y="9.5" width="2.300" height="1.300" fill="#fff"/><rect x="5.1" y="9.5" width="2.300" height="1.300" fill="#fff"/><rect x="8.2" y="9.5" width="2.300" height="1.300" fill="#fff"/><rect x="11.3" y="9.5" width="2.300" height="1.300" fill="#fff"/><rect x="2.0" y="11.6" width="2.300" height="1.300" fill="#fff"/><rect x="5.1" y="11.6" width="2.300" height="1.300" fill="#fff"/><rect x="8.2" y="11.6" width="2.300" height="1.300" fill="#fff"/><rect x="11.3" y="11.6" width="2.300" height="1.300" fill="#fff"/></svg><svg style="left:415px;top:108px" width="8" height="7" viewBox="0 0 8 7"><path d="M.4 2.300 h3.800 v-2 l3.600 3.200 l-3.600 3.200 v-2 h-3.800z" fill="#38a8f4" stroke="#1868c0" stroke-width=".8"/></svg><svg style="left:429px;top:106px" width="5" height="3" fill="#000" shape-rendering="crispEdges"><rect x="0" y="0" width="5" height="1"/><rect x="1" y="1" width="3" height="1"/><rect x="2" y="2" width="1" height="1"/></svg><div class="ysep" style="left:442px;top:95px;height:24px"></div><span class="t" style="left:451px;top:99px;transform:scaleX(.868)">Sortierung übernehmen</span><div class="ysep" style="left:569px;top:95px;height:24px"></div><span class="t" style="left:578px;top:99px;transform:scaleX(.85)">Serienbrief</span><div class="a" style="left:632px;top:94px;width:64px;height:25px;border:2px solid #e2231a;border-radius:12px"></div><span class="t" style="left:641px;top:99px;transform:scaleX(.868)">Im-/Export</span><div class="ysep" style="left:697px;top:95px;height:24px"></div><span class="t" style="left:706px;top:99px">Gäste Zeitabhängig</span><span class="t" style="left:808px;top:100px;transform:scaleX(.865)">Preis Erw.:</span><div class="inp" style="left:860px;top:99px;width:60px;height:17px"></div><span class="t" style="left:883px;top:100px">45,00</span>
<div class="a" style="left:175px;top:124px;width:716px;height:525px;background:#fff"></div>
<div class="a" style="left:175px;top:123px;width:733px;height:1px;background:#000"></div>
<div class="a" style="left:175px;top:649px;width:716px;height:1px;background:#000"></div>
<div class="a" style="left:907px;top:123px;width:1px;height:509px;background:#000"></div>
<div class="a" style="left:891px;top:124px;width:16px;height:508px;background:#eeeeee"></div>
<div class="a" style="left:891px;top:632px;width:17px;height:18px;background:#f0f0f0"></div>
<svg style="left:896px;top:131px" width="7" height="4" shape-rendering="crispEdges"><rect x="3" y="0" width="1" height="1" fill="#6e6e6e"/><rect x="2" y="1" width="3" height="1" fill="#868686"/><rect x="1" y="2" width="5" height="1" fill="#9c9c9c"/><rect x="0" y="3" width="7" height="1" fill="#b0b0b0"/></svg>
<svg style="left:896px;top:622px" width="7" height="4" shape-rendering="crispEdges"><rect x="0" y="0" width="7" height="1" fill="#6e6e6e"/><rect x="1" y="1" width="5" height="1" fill="#868686"/><rect x="2" y="2" width="3" height="1" fill="#9c9c9c"/><rect x="3" y="3" width="1" height="1" fill="#b0b0b0"/></svg>
<svg style="left:898px;top:640px" width="9" height="9" viewBox="0 0 9 9"><rect x="6" y="0" width="2" height="2" fill="#b8b8b8"/><rect x="3" y="3" width="2" height="2" fill="#b8b8b8"/><rect x="6" y="3" width="2" height="2" fill="#b8b8b8"/><rect x="0" y="6" width="2" height="2" fill="#b8b8b8"/><rect x="3" y="6" width="2" height="2" fill="#b8b8b8"/><rect x="6" y="6" width="2" height="2" fill="#b8b8b8"/></svg>
<div class="a" style="left:175px;top:124px;width:716px;height:164px;background:#f0f0f0"></div>
<div class="a" style="left:175px;top:289px;width:716px;height:15px;background:#ffff9c"></div>
<div class="a" style="left:175px;top:286px;width:716px;height:1px;background:#fff"></div>
<div class="a" style="left:175px;top:287px;width:716px;height:2px;background:#000"></div>
<div class="hl" style="left:175px;top:140px;width:716px"></div>
<div class="hl" style="left:175px;top:154px;width:716px"></div>
<div class="hl" style="left:175px;top:168px;width:716px"></div>
<div class="hl" style="left:175px;top:184px;width:716px"></div>
<div class="hl" style="left:175px;top:198px;width:716px"></div>
<div class="hl" style="left:175px;top:212px;width:716px"></div>
<div class="hl" style="left:175px;top:228px;width:716px"></div>
<div class="hl" style="left:175px;top:244px;width:716px"></div>
<div class="hl" style="left:175px;top:260px;width:716px"></div>
<div class="hl" style="left:175px;top:274px;width:716px"></div>
<div class="hl" style="left:175px;top:304px;width:716px"></div>
<div class="vl" style="left:355px;top:124px;height:180px"></div>
<div class="a" style="left:356px;top:124px;width:1px;height:16px;background:#fff"></div>
<div class="vl" style="left:391px;top:124px;height:180px"></div>
<div class="a" style="left:392px;top:124px;width:1px;height:16px;background:#fff"></div>
<div class="vl" style="left:429px;top:124px;height:180px"></div>
<div class="a" style="left:430px;top:124px;width:1px;height:16px;background:#fff"></div>
<div class="vl" style="left:463px;top:124px;height:180px"></div>
<div class="a" style="left:464px;top:124px;width:1px;height:16px;background:#fff"></div>
<div class="vl" style="left:509px;top:124px;height:180px"></div>
<div class="a" style="left:510px;top:124px;width:1px;height:16px;background:#fff"></div>
<div class="vl" style="left:553px;top:124px;height:180px"></div>
<div class="a" style="left:554px;top:124px;width:1px;height:16px;background:#fff"></div>
<div class="vl" style="left:597px;top:124px;height:180px"></div>
<div class="a" style="left:598px;top:124px;width:1px;height:16px;background:#fff"></div>
<div class="vl" style="left:629px;top:124px;height:180px"></div>
<div class="a" style="left:630px;top:124px;width:1px;height:16px;background:#fff"></div>
<div class="vl" style="left:678px;top:124px;height:180px"></div>
<div class="a" style="left:679px;top:124px;width:1px;height:16px;background:#fff"></div>
<div class="a" style="left:175px;top:124px;width:716px;height:1px;background:#fff"></div>
<span class="t " style="left:177px;top:125px;">Name</span>
<span class="t " style="left:358px;top:125px;">T.Nr.</span>
<span class="t " style="left:394px;top:125px;">Pl.Nr.</span>
<span class="t " style="left:432px;top:125px;">Sort.</span>
<span class="t " style="left:466px;top:125px;">Pers.</span>
<span class="t " style="left:512px;top:125px;">Preis</span>
<span class="t " style="left:556px;top:125px;">Restb.</span>
<span class="t " style="left:600px;top:125px;">bez.</span>
<span class="t " style="left:632px;top:125px;">Status</span>
<span class="t " style="left:681px;top:125px;">Bemerkung</span>
<span class="t " style="left:177px;top:141px;">Adebahr, Marcus, Herr</span>
<span class="t " style="left:358px;top:141px;">6</span>
<span class="t r " style="right:489px;top:141px;">0</span>
<span class="t r " style="right:456px;top:141px;">0</span>
<span class="t " style="left:466px;top:141px;">2+3</span>
<span class="t r " style="right:365px;top:141px;">180,00</span>
<span class="t r " style="right:321px;top:141px;">180,00</span>
<span class="t " style="left:632px;top:141px;">Definitiv</span>
<span class="t " style="left:177px;top:155px;">Bittermann, Heike, Frau</span>
<span class="t " style="left:358px;top:155px;">4</span>
<span class="t r " style="right:489px;top:155px;">0</span>
<span class="t r " style="right:456px;top:155px;">0</span>
<span class="t " style="left:466px;top:155px;">4</span>
<span class="t r " style="right:365px;top:155px;">180,00</span>
<span class="t r " style="right:321px;top:155px;">180,00</span>
<span class="t " style="left:632px;top:155px;">Definitiv</span>
<span class="t " style="left:177px;top:169px;">Darma, Christiane, Frau</span>
<span class="t " style="left:358px;top:169px;">3</span>
<span class="t r " style="right:489px;top:169px;">0</span>
<span class="t r " style="right:456px;top:169px;">0</span>
<span class="t " style="left:466px;top:169px;">6+1</span>
<span class="t r " style="right:365px;top:169px;">300,00</span>
<span class="t r " style="right:321px;top:169px;">0,00</span>
<span class="t " style="left:632px;top:169px;">Definitiv</span>
<div class="cb" style="left:598px;top:170px"></div><svg style="left:600px;top:172px" width="9" height="9" viewBox="0 0 9 9"><path d="M1.200 4.200 L3.600 7.300 L8 .8" fill="none" stroke="#4a5f97" stroke-width="2.200"/></svg>
<span class="t " style="left:177px;top:185px;">Darma, Christiane, Frau</span>
<span class="t r " style="right:489px;top:185px;">0</span>
<span class="t r " style="right:456px;top:185px;">0</span>
<span class="t " style="left:466px;top:185px;">1+1</span>
<span class="t r " style="right:365px;top:185px;">75,00</span>
<span class="t r " style="right:321px;top:185px;">75,00</span>
<span class="t " style="left:632px;top:185px;">Definitiv</span>
<span class="t " style="left:177px;top:199px;">Fries, Anton, Herr, Bestattungshaus</span>
<span class="t " style="left:358px;top:199px;">1+2</span>
<span class="t r " style="right:489px;top:199px;">0</span>
<span class="t r " style="right:456px;top:199px;">0</span>
<span class="t " style="left:466px;top:199px;">5+3</span>
<span class="t r " style="right:365px;top:199px;">315,00</span>
<span class="t r " style="right:321px;top:199px;">315,00</span>
<span class="t " style="left:632px;top:199px;">Definitiv</span>
<span class="t " style="left:177px;top:213px;">Gehrmann, Andreas, Herrn</span>
<span class="t " style="left:358px;top:213px;">5</span>
<span class="t r " style="right:489px;top:213px;">0</span>
<span class="t r " style="right:456px;top:213px;">0</span>
<span class="t " style="left:466px;top:213px;">2+2</span>
<span class="t r " style="right:365px;top:213px;">150,00</span>
<span class="t r " style="right:321px;top:213px;">0,00</span>
<span class="t " style="left:632px;top:213px;">Definitiv</span>
<div class="cb" style="left:598px;top:214px"></div><svg style="left:600px;top:216px" width="9" height="9" viewBox="0 0 9 9"><path d="M1.200 4.200 L3.600 7.300 L8 .8" fill="none" stroke="#4a5f97" stroke-width="2.200"/></svg>
<span class="t " style="left:177px;top:229px;">Graf, Karl-Heinz, Herr</span>
<span class="t r " style="right:489px;top:229px;">0</span>
<span class="t r " style="right:456px;top:229px;">0</span>
<span class="t " style="left:466px;top:229px;">2+2</span>
<span class="t r " style="right:365px;top:229px;">150,00</span>
<span class="t r " style="right:321px;top:229px;">0,00</span>
<span class="t " style="left:632px;top:229px;">Definitiv</span>
<div class="cb" style="left:598px;top:230px"></div><svg style="left:600px;top:232px" width="9" height="9" viewBox="0 0 9 9"><path d="M1.200 4.200 L3.600 7.300 L8 .8" fill="none" stroke="#4a5f97" stroke-width="2.200"/></svg>
<span class="t " style="left:177px;top:245px;">Klopfer, Carsten, Herrn</span>
<span class="t " style="left:358px;top:245px;">9-11</span>
<span class="t r " style="right:489px;top:245px;">0</span>
<span class="t r " style="right:456px;top:245px;">0</span>
<span class="t " style="left:466px;top:245px;">10</span>
<span class="t r " style="right:365px;top:245px;">450,00</span>
<span class="t r " style="right:321px;top:245px;">0,00</span>
<span class="t " style="left:632px;top:245px;">Definitiv</span>
<div class="cb" style="left:598px;top:246px"></div><svg style="left:600px;top:248px" width="9" height="9" viewBox="0 0 9 9"><path d="M1.200 4.200 L3.600 7.300 L8 .8" fill="none" stroke="#4a5f97" stroke-width="2.200"/></svg>
<span class="t " style="left:177px;top:261px;">Lehmann, Ina, Frau</span>
<span class="t " style="left:358px;top:261px;">7</span>
<span class="t r " style="right:489px;top:261px;">0</span>
<span class="t r " style="right:456px;top:261px;">0</span>
<span class="t " style="left:466px;top:261px;">3+1</span>
<span class="t r " style="right:365px;top:261px;">165,00</span>
<span class="t r " style="right:321px;top:261px;">65,00</span>
<span class="t " style="left:632px;top:261px;">Definitiv</span>
<span class="t " style="left:177px;top:275px;clip-path:inset(0 0 2px 0);">Trapper, Wilhelm, Herrn</span>
<span class="t " style="left:358px;top:275px;clip-path:inset(0 0 2px 0);">11</span>
<span class="t r " style="right:489px;top:275px;clip-path:inset(0 0 2px 0);">0</span>
<span class="t r " style="right:456px;top:275px;clip-path:inset(0 0 2px 0);">0</span>
<span class="t " style="left:466px;top:275px;clip-path:inset(0 0 2px 0);">2</span>
<span class="t r " style="right:365px;top:275px;clip-path:inset(0 0 2px 0);">90,00</span>
<span class="t r " style="right:321px;top:275px;clip-path:inset(0 0 2px 0);">90,00</span>
<span class="t " style="left:632px;top:275px;clip-path:inset(0 0 2px 0);">Definitiv</span>
<span class="t b" style="left:177px;top:289px;">Einträge: 10</span>
<span class="t b" style="left:466px;top:289px;">37+13</span>
<span class="t r b" style="right:365px;top:289px;">2055</span>
<span class="t r b" style="right:321px;top:289px;">905</span>
<span class="t b" style="left:600px;top:289px;">4</span>
</div></div></div></body></html>
